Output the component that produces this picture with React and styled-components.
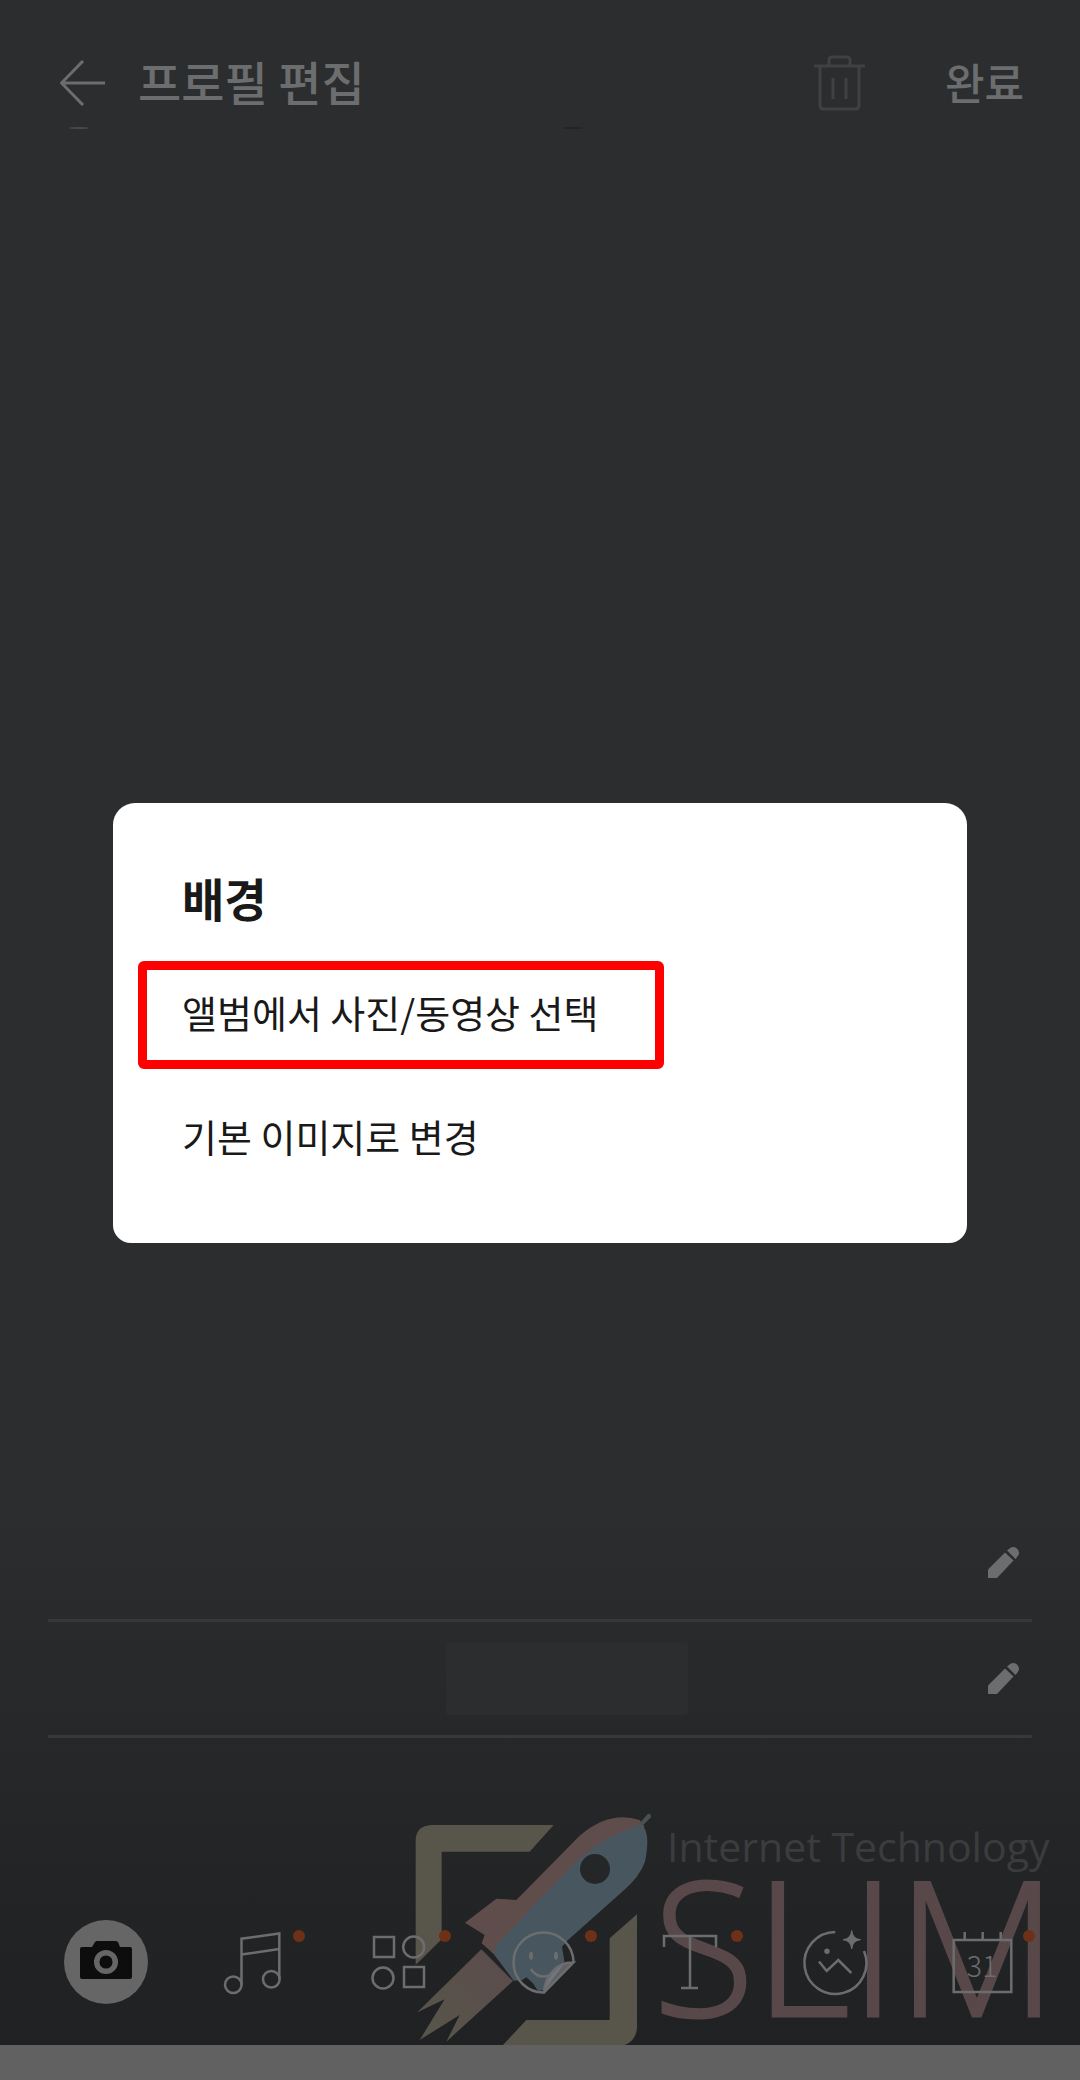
import React from "react";
import styled, { createGlobalStyle } from "styled-components";

const GlobalStyle = createGlobalStyle`
  * {
    box-sizing: border-box;
  }

  body {
    margin: 0;
    background-color: #2c2d2f;
    font-family: "Noto Sans CJK KR", "Noto Sans", sans-serif;
  }

  button {
    margin: 0;
    padding: 0;
    border: 0;
    background: none;
    color: inherit;
    font: inherit;
    cursor: pointer;
  }

  svg {
    display: block;
  }
`;

const Page = styled.div`
  display: flex;
  flex-direction: column;
  min-height: 100vh;
`;

const Stage = styled.main`
  position: relative;
  flex: 1;
  display: flex;
  flex-direction: column;
  color: #6c6d6e;
  background: linear-gradient(to top, #202123 0, #232426 160px, #2c2d2f 540px);
`;

const SystemBar = styled.div`
  height: 35px;
  background-color: #616161;
`;

const Header = styled.header`
  display: flex;
  align-items: center;
  height: 60px;
  margin-top: 53px;
  padding: 0 56px 0 60px;
`;

const Title = styled.h1`
  margin: 0 auto 0 33px;
  padding-bottom: 4px;
  font-size: 47px;
  line-height: 56px;
  font-weight: 500;
`;

const TrashButton = styled.button`
  margin-right: 80px;
  color: #404143;
`;

const DoneButton = styled.button`
  padding-bottom: 4px;
  font-size: 43px;
  line-height: 56px;
  font-weight: 500;
`;

const Hints = styled.div`
  display: flex;
  justify-content: space-between;
  margin-top: 14px;
  padding: 0 46% 0 69px;
`;

const Hint = styled.span`
  width: 20px;
  height: 2px;
  border-radius: 50%;
  background-color: ${(props) => props.$color};
`;

const Fields = styled.section`
  margin: auto 48px 182px;
`;

const Field = styled.div`
  display: flex;
  align-items: center;
  height: 116px;
  padding-right: 13px;
  border-bottom: 3px solid #37383a;
`;

const FieldValue = styled.span`
  width: 242px;
  height: 72px;
  margin-left: 41%;
  border-radius: 4px;
  background-color: #2c2d2f;
`;

const EditButton = styled.button`
  margin-left: auto;
`;

const Tools = styled.nav`
  position: relative;
  display: flex;
  padding: 0 25px 41px 33px;
`;

const ToolCell = styled.div`
  flex: 1;
  display: flex;
  justify-content: center;
`;

const ToolButton = styled.button`
  position: relative;
  width: 84px;
  height: 84px;
  border-radius: 50%;
  background-color: ${(props) => (props.$filled ? "#666666" : "transparent")};
`;

const NewDot = styled.span`
  position: absolute;
  top: 10px;
  left: 83px;
  width: 12px;
  height: 12px;
  border-radius: 50%;
  background-color: #6e3118;
`;

const Watermark = styled.div`
  position: absolute;
  right: 26px;
  bottom: 0;
  display: flex;
`;

const WatermarkText = styled.div`
  display: flex;
  flex-direction: column;
  width: 401px;
  padding-left: 14px;
`;

const Tagline = styled.span`
  margin-top: 6px;
  color: #3b3c3e;
  font-family: "Open Sans", sans-serif;
  font-size: 41px;
  line-height: 60px;
  white-space: nowrap;
`;

const Brand = styled.span`
  margin-left: -14px;
  color: #584849;
  font-family: "Open Sans", sans-serif;
  font-size: 186px;
  font-weight: 300;
  line-height: 136px;
  -webkit-text-stroke: 3px #584849;
`;

const Overlay = styled.div`
  position: absolute;
  inset: 0;
  display: flex;
  align-items: center;
  justify-content: center;
  padding: 0 113px;
`;

const Dialog = styled.section`
  display: flex;
  flex-direction: column;
  align-items: flex-start;
  width: 100%;
  padding: 64px 25px 50px;
  border-radius: 22px 22px 18px 18px;
  color: #191919;
  background-color: #ffffff;
`;

const DialogTitle = styled.h2`
  margin: 0 0 34px 44px;
  font-size: 46px;
  line-height: 60px;
  font-weight: 700;
`;

const Option = styled.button`
  height: 108px;
  margin-bottom: ${(props) => (props.$marked ? "16px" : "0")};
  padding: 0 57px 6px 35px;
  border: 9px solid ${(props) => (props.$marked ? "#ff0000" : "transparent")};
  border-radius: 6px;
  font-size: 38px;
  line-height: 56px;
  white-space: nowrap;
`;

const BackIcon = () => (
  <svg width="45" height="46" viewBox="0 0 45 46" fill="none" stroke="currentColor" strokeWidth="3">
    <path d="M23 1 1.5 23 23 45M2 23H45" />
  </svg>
);

const TrashIcon = () => (
  <svg width="51" height="56" viewBox="0 0 51 56" fill="none" stroke="currentColor" strokeWidth="3">
    <path d="M0 11H51M15 11V5Q15 2 18 2H33Q36 2 36 5V11M6 11V50Q6 54 10 54H41Q45 54 45 50V11" />
    <path d="M19 23V44M32 23V44" />
  </svg>
);

const PencilIcon = () => (
  <svg width="31" height="31" viewBox="0 0 31 31" fill="currentColor">
    <path d="M0 22.5 17 5.5 25.500 13.5 9 31H0Z" />
    <path d="M19 3.500 21.500 1.500Q26-1.500 29.500 2Q32.500 6 29.500 9.500L27.500 12Z" />
  </svg>
);

const CameraIcon = () => (
  <>
    <path
      d="M18 27H28L31 22Q32 21 33 21H51Q53 21 54 22L56 27H66Q68 27 68 29V57Q68 59 66 59H18Q16 59 16 57V29Q16 27 18 27Z"
      fill="#0d0d0d"
      stroke="none"
    />
    <circle cx="42" cy="42" r="9.3" stroke="#666666" strokeWidth="5.5" />
  </>
);

const MusicIcon = () => (
  <>
    <path d="M31.5 65V18.7L69.3 13.5V59M31.5 34.5 69.3 29" />
    <circle cx="23.3" cy="64.7" r="8.3" />
    <circle cx="61.3" cy="59.3" r="8.3" />
  </>
);

const WidgetIcon = () => (
  <>
    <rect x="18" y="17" width="20" height="20" />
    <circle cx="57.7" cy="27" r="10.5" />
    <circle cx="27" cy="58" r="10.5" />
    <rect x="48" y="47" width="20" height="20" />
  </>
);

const StickerIcon = () => (
  <>
    <path d="M71.5 42.5Q60 42 52 50Q43 58 42 72.5Z" fill="#8c8a92" fillOpacity="0.6" stroke="none" />
    <path d="M71.5 42.5A30 30 0 1 0 42 72.5L71.5 42.5Q60 42 52 50Q43 58 42 72.5" />
    <path d="M28.7 49Q36 60 49 55" />
    <ellipse cx="29" cy="35.7" rx="2" ry="4" fill="currentColor" stroke="none" />
    <ellipse cx="54" cy="35.7" rx="2" ry="4" fill="currentColor" stroke="none" />
  </>
);

const TextIcon = () => <path d="M16 27V16H68V27M42 16V68M33 68H50" />;

const PhotoIcon = () => (
  <>
    <path d="M41.3 12A31 31 0 1 0 70 31" />
    <path d="M25 41.5 32.7 51 44.3 40 57.3 53" />
    <circle cx="33" cy="31.3" r="2.7" fill="currentColor" stroke="none" />
    <path
      d="M57.7 10.5Q58.5 18.9 66.5 19.7 58.5 20.5 57.7 29 56.9 20.5 49 19.7 56.9 18.9 57.7 10.5Z"
      fill="currentColor"
      strokeWidth="1"
    />
  </>
);

const CalendarIcon = () => (
  <>
    <path d="M13.7 20H71.3V72H13.7ZM24.7 12V20M42.7 12V20M60.7 12V20" />
    <text
      x="42"
      y="57"
      textAnchor="middle"
      fontFamily="Noto Sans CJK KR, sans-serif"
      fontSize="29"
      fontWeight="300"
      fill="currentColor"
      stroke="none"
    >
      31
    </text>
  </>
);

const RocketLogo = () => (
  <svg width="240" height="235" viewBox="190 60 720 705">
    <defs>
      <linearGradient id="flame" x1="430" y1="520" x2="250" y2="700" gradientUnits="userSpaceOnUse">
        <stop offset="0" stopColor="#5b4d4b" />
        <stop offset="1" stopColor="#57544a" />
      </linearGradient>
    </defs>
    <g fill="#58554a">
      <path d="M198 525V150Q200 107 245 105H612L540 185H276V448Z" />
      <path d="M862 373V715Q858 758 815 768H457L530 690H780V445Z" />
    </g>
    <path d="M395 478 490 573 290 755 330 675 210 750 285 628 203 667Z" fill="url(#flame)" />
    {/* hull and left fin */}
    <path d="M432 492 396 460 405 435 346 398 440 326 500 330 690 137Q780 60 870 90L885 110 640 330Z" fill="#5f4d4c" />
    <path
      d="M872 103Q905 120 886 215Q870 260 820 303L655 450 637 470 645 520 585 600 565 603 550 580 530 562 518 570 492 572 432 492 440 465 660 235Q740 150 872 103Z"
      fill="#48575f"
    />
    <path d="M870 100 894 72Q904 68 904 82L880 106Z" fill="#4a4f52" />
    <circle cx="736" cy="237" r="45" fill="#252628" />
  </svg>
);

const tools = [
  { label: "카메라", Icon: CameraIcon, filled: true },
  { label: "음악", Icon: MusicIcon, isNew: true },
  { label: "위젯", Icon: WidgetIcon, isNew: true },
  { label: "스티커", Icon: StickerIcon, isNew: true },
  { label: "텍스트", Icon: TextIcon, isNew: true },
  { label: "사진 효과", Icon: PhotoIcon },
  { label: "디데이", Icon: CalendarIcon, isNew: true },
];

function App() {
  return (
    <Page>
      <GlobalStyle />
      <Stage>
        <Header>
          <button type="button" aria-label="뒤로">
            <BackIcon />
          </button>
          <Title>프로필 편집</Title>
          <TrashButton type="button" aria-label="삭제">
            <TrashIcon />
          </TrashButton>
          <DoneButton type="button">완료</DoneButton>
        </Header>
        <Hints>
          <Hint $color="#48494a" />
          <Hint $color="#232426" />
        </Hints>

        <Fields>
          <Field>
            <EditButton type="button" aria-label="이름 편집">
              <PencilIcon />
            </EditButton>
          </Field>
          <Field>
            <FieldValue />
            <EditButton type="button" aria-label="상태메시지 편집">
              <PencilIcon />
            </EditButton>
          </Field>
        </Fields>

        <Watermark>
          <RocketLogo />
          <WatermarkText>
            <Tagline>Internet Technology</Tagline>
            <Brand>SLIM</Brand>
          </WatermarkText>
        </Watermark>

        <Tools>
          {tools.map(({ label, Icon, filled, isNew }) => (
            <ToolCell key={label}>
              <ToolButton type="button" aria-label={label} $filled={filled}>
                <svg width="84" height="84" viewBox="0 0 84 84" fill="none" stroke="currentColor" strokeWidth="2.5">
                  <Icon />
                </svg>
                {isNew && <NewDot />}
              </ToolButton>
            </ToolCell>
          ))}
        </Tools>

        <Overlay>
          <Dialog role="dialog" aria-labelledby="dialog-title">
            <DialogTitle id="dialog-title">배경</DialogTitle>
            <Option type="button" $marked>
              앨범에서 사진/동영상 선택
            </Option>
            <Option type="button">기본 이미지로 변경</Option>
          </Dialog>
        </Overlay>
      </Stage>
      <SystemBar />
    </Page>
  );
}

export default App;
